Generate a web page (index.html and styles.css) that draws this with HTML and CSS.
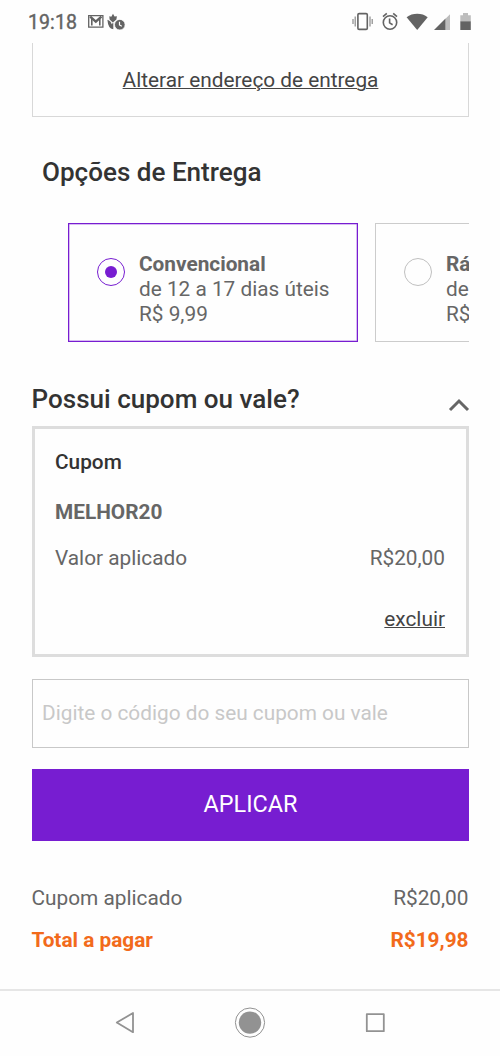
FILE: index.html
```
<!DOCTYPE html>
<html lang="pt-BR">
<head>
<meta charset="utf-8">
<title>Entrega e cupom</title>
<link rel="stylesheet" href="styles.css">
</head>
<body>
<header class="status">
  <span class="clock">19:18</span>
  <svg class="notif" width="40" height="18" viewBox="0 0 40 18">
    <path class="mail" d="M1.700 2.700h14.200v11.400H1.700z"/><path class="mail-flap" d="M3.200 3.600l5.600 5 5.600-5"/><path class="mail-side" d="M4.800 5.500v7M12.800 5.500v7"/>
    <path class="fill" d="M26 .8l1.500 2.700 2.400-.300-.500 3.300-3.600 2.900-3.200-3-.300-3.100 2 .400z"/>
    <path class="fill" d="M20.400 6.800q3.600 1.200 4.300 4.500l1.600-1.900v6.800q-5.300-.500-5.900-9.400z"/>
    <circle class="clock-dot" cx="32.800" cy="11.700" r="5.300"/>
    <path class="clock-hand" d="M32.500 8.700v3.300l2.300 1.300"/>
  </svg>
  <svg class="system" width="122" height="22" viewBox="0 0 122 22">
    <g class="line"><rect x="5.900" y="2.600" width="9.400" height="15.800" rx="1.200"/></g>
    <path class="thin" d="M3.200 5.500v10M1 8v5M18 5.500v10M20.200 8v5"/>
    <g class="line"><circle cx="38" cy="11.500" r="6.700"/><path d="M37.600 7.600v4.300l3 1.800M31 5.600l3.800-3.200M45 5.600l-3.800-3.200"/></g>
    <path class="fill" d="M54.600 6.200C60.500 1.700 70 1.700 75.700 6.200L65.200 19z"/>
    <path class="pale" d="M93.500 7.800L98 3.300V19h-4.500z"/>
    <path class="fill" d="M82 19L93.500 7.500V19z"/>
    <path class="pale" d="M108.300 10.500V4.200h2.700V2h5v2.200h2.800v6.300z"/>
    <path class="fill" d="M108.300 10.300h10.500V19h-10.500z"/>
  </svg>
</header>
<main class="page">
  <section class="address"><a class="link">Alterar endereço de entrega</a></section>
  <h2 class="title title-delivery">Opções de Entrega</h2>
  <div class="options">
    <div class="option selected">
      <span class="radio"></span>
      <div class="option-text"><b>Convencional</b><span>de 12 a 17 dias úteis</span><span>R$ 9,99</span></div>
    </div>
    <div class="option">
      <span class="radio"></span>
      <div class="option-text"><b>Rá</b><span>de</span><span>R$</span></div>
    </div>
  </div>
  <div class="coupon-head">
    <h2 class="title title-coupon">Possui cupom ou vale?</h2>
    <svg class="chevron" width="22" height="14" viewBox="0 0 22 14"><path d="M2 12l9-9 9 9"/></svg>
  </div>
  <section class="coupon">
    <h3 class="coupon-label">Cupom</h3>
    <div class="coupon-code">MELHOR20</div>
    <div class="row coupon-value"><span>Valor aplicado</span><span>R$20,00</span></div>
    <div class="coupon-remove"><a class="link">excluir</a></div>
  </section>
  <input class="code" type="text" placeholder="Digite o código do seu cupom ou vale">
  <button class="apply" type="button">APLICAR</button>
  <div class="row applied"><span>Cupom aplicado</span><span>R$20,00</span></div>
  <div class="row total"><span>Total a pagar</span><span>R$19,98</span></div>
</main>
<nav class="nav">
  <svg width="24" height="32" viewBox="0 0 24 32"><path class="nav-line" d="M20 6v19.200L3.800 15.600z"/></svg>
  <svg width="32" height="32" viewBox="0 0 32 32"><circle class="nav-ring" cx="16" cy="15.600" r="14.600"/><circle class="nav-dot" cx="16" cy="15.600" r="11.200"/></svg>
  <svg width="24" height="32" viewBox="0 0 24 32"><rect class="nav-line" x="3.800" y="7.200" width="17" height="17"/></svg>
</nav>
</body>
</html>
```
FILE: styles.css
```
* { box-sizing: border-box; }
body {
  margin: 0;
  width: 500px;
  height: 1056px;
  display: flex;
  flex-direction: column;
  overflow: hidden;
  background: #fefefe;
  color: #666;
  font-family: Roboto, "Liberation Sans", sans-serif;
  font-size: 20.800px;
  line-height: 25px;
}
.status { height: 43px; display: flex; align-items: flex-start; padding: 11px 26px 0 28px; flex: none; }
.clock { font-size: 19.500px; line-height: 24px; letter-spacing: .1px; color: #636363; -webkit-text-stroke: .4px #636363; width: 59px; }
.notif { margin-top: 2px; }
.system { margin-left: auto; }
.fill { fill: #636363; }
.pale { fill: #bdbdbd; }
.line { fill: none; stroke: #636363; stroke-width: 1.600; }
.thin { fill: none; stroke: #8a8a8a; stroke-width: 1.200; }
.mail { fill: none; stroke: #636363; stroke-width: 1.300; }
.mail-flap { fill: none; stroke: #636363; stroke-width: 2.400; }
.mail-side { fill: none; stroke: #636363; stroke-width: 1.600; }
.clock-dot { fill: #636363; stroke: #fefefe; stroke-width: .8; }
.clock-hand { fill: none; stroke: #fefefe; stroke-width: 1.200; }
.page { padding: 0 31px 0 32px; flex: 1; display: flex; flex-direction: column; }
.address { height: 74px; border: solid #d8d8d8; border-width: 0 1px 1px; padding-top: 25px; text-align: center; }
.link { color: #444; text-decoration: underline; text-decoration-thickness: 1px; }
.title { margin: 0; font-weight: 500; font-size: 26.050px; line-height: 30px; color: #333; }
.title-delivery { margin: 40px 0 0 10px; }
.options { display: flex; gap: 17px; margin: 36px 0 0 36px; overflow: hidden; }
.option { flex: 0 0 290px; height: 119px; border: 1px solid #ccc; padding: 28px 0 0 28px; display: flex; gap: 14px; white-space: nowrap; }
.option.selected { border-color: #771dd1; box-shadow: inset 0 0 0 .5px #b07be3; }
.option-text { display: flex; flex-direction: column; }
.radio { width: 28px; height: 28px; margin-top: 6px; border: 1px solid #c0c0c0; border-radius: 50%; display: grid; place-items: center; }
.selected .radio { border-color: #771dd1; }
.selected .radio::after { content: ""; width: 12px; height: 12px; border-radius: 50%; background: #771dd1; }
.coupon-head { display: flex; justify-content: space-between; margin-top: 41px; height: 43px; }
.title-coupon { padding-top: 1px; margin-left: -.5px; }
.chevron { margin: 15px -1px 0 0; fill: none; stroke: #666; stroke-width: 3; }
.coupon { height: 231px; border: 3px solid #ddd; padding: 21px 21px 0 20px; }
.coupon-label { margin: 0; font-size: inherit; font-weight: 500; color: #333; }
.coupon-code { font-weight: 700; margin-top: 25px; }
.row { display: flex; justify-content: space-between; }
.coupon-value { margin-top: 21px; }
.coupon-remove { margin-top: 36px; text-align: right; }
.code { flex: none; width: 100%; height: 69px; margin-top: 22px; border: 1px solid #c8c8c8; padding: 0 9px 1px; font: inherit; background: #fefefe; }
.code::placeholder { color: #c8c8c8; opacity: 1; }
.apply { flex: none; height: 72px; margin-top: 21px; border: 0; padding: 0 0 2px; background: #771dd1; color: #fff; font: 23.400px Roboto, "Liberation Sans", sans-serif; }
.applied { margin: 45px .5px 0 -.5px; }
.total { margin: 17px .5px 0 -.5px; color: #f26a1b; font-weight: 700; }
.nav { height: 67px; flex: none; border-top: 2px solid #e6e6e6; display: grid; grid-template-columns: repeat(3, 125px); justify-content: center; justify-items: center; padding-top: 16px; }
.nav-line { fill: none; stroke: #929292; stroke-width: 1.800; stroke-linejoin: round; }
.nav-ring { fill: none; stroke: #929292; stroke-width: 1; }
.nav-dot { fill: #929292; }
```
